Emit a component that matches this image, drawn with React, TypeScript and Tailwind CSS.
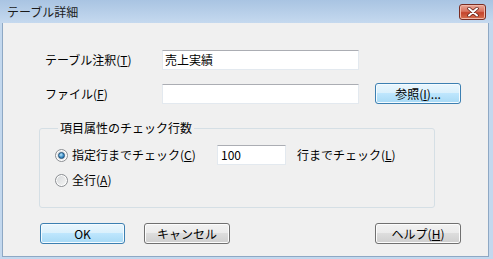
import React from "react";

function Mn({ c }: { c: string }) {
  return (
    <>
      (<span className="underline underline-offset-[1px]">{c}</span>)
    </>
  );
}

function Radio({ checked }: { checked?: boolean }) {
  return (
    <span className="flex h-[13px] w-[13px] shrink-0 items-center justify-center rounded-full border border-[#8c8f93] bg-[linear-gradient(135deg,#d4d6d8,#f7f7f7)] shadow-[inset_0_0_0_1px_#ffffff]">
      {checked && (
        <span className="h-[7px] w-[7px] rounded-full border border-[#1f4f78] bg-[radial-gradient(circle_at_40%_35%,#bfe8fb,#3d8fc8_55%,#1b5d93)]" />
      )}
    </span>
  );
}

function Input({ value, className }: { value?: string; className: string }) {
  return (
    <div
      className={`flex items-center border border-[#e3e9ef] border-t-[#abadb3] bg-white pl-[2px] text-[12px] text-black ${className}`}
    >
      {value}
    </div>
  );
}

const grayBtn =
  "flex items-center justify-center rounded-[3px] border border-[#707070] bg-[linear-gradient(to_bottom,#f2f2f2_0%,#ebebeb_50%,#dddddd_50%,#cfcfcf_100%)] shadow-[inset_0_0_0_1px_#fcfcfc] text-[12px] text-black";
const blueBtn =
  "flex items-center justify-center rounded-[3px] border border-[#3c7fb1] bg-[linear-gradient(to_bottom,#eaf6fd_0%,#d9f0fc_50%,#bee6fd_50%,#a7d9f5_100%)] shadow-[inset_0_0_0_1px_#f4fbff] text-[12px] text-black";

export default function App() {
  return (
    <div className="flex h-[259px] w-[493px] flex-col bg-[#c3d8ee] font-['Noto_Sans_CJK_JP','Liberation_Sans',sans-serif] text-[12px] leading-[16px] text-black">
      {/* title bar */}
      <div className="flex h-[23px] items-center justify-between bg-[linear-gradient(to_bottom,#a9c4e2,#c5d9ef)] pl-[7px] pr-[7px]">
        <span className="text-[12px] text-[#1b1b1b]">テーブル詳細</span>
        <div className="flex h-[16px] w-[27px] items-center justify-center rounded-[3px] border border-[#7a2d22] bg-[linear-gradient(to_bottom,#e9a898_0%,#d9735e_45%,#c4432b_55%,#d6704f_100%)] shadow-[inset_0_0_0_1px_#f0b7a8]">
          <svg width="12" height="10" viewBox="0 0 12 10">
            <path d="M2 1.5 L10 8.5 M10 1.5 L2 8.5" stroke="#5a1d14" strokeWidth="3.4" strokeLinecap="round" />
            <path d="M2 1.5 L10 8.5 M10 1.5 L2 8.5" stroke="#ffffff" strokeWidth="2" strokeLinecap="round" />
          </svg>
        </div>
      </div>

      {/* frame + client */}
      <div className="flex flex-1 flex-col pb-[2px] pl-[2px] pr-[4px]">
        <div className="flex flex-1 flex-col border border-t-0 border-[#8ea8c4] bg-[#f0f0f0] pl-[36px]">
          <div className="mt-[27px] flex h-[20px] items-center">
            <span className="w-[123px] pl-[6px]">
              テーブル注釈<Mn c="T" />
            </span>
            <Input value="売上実績" className="h-[20px] w-[197px]" />
          </div>

          <div className="mt-[13px] flex h-[21px] items-center">
            <span className="w-[123px] pl-[6px]">
              ファイル<Mn c="F" />
            </span>
            <Input className="h-[20px] w-[197px]" />
            <div className={`${blueBtn} ml-[16px] h-[21px] w-[86px]`}>
              参照<Mn c="I" />...
            </div>
          </div>

          <fieldset className="mt-[16px] w-[396px] rounded-[3px] border border-[#d5dfe5] pb-[17px] pl-[15px]">
            <legend className="ml-[3px] px-[2px]">項目属性のチェック行数</legend>
            <div className="mt-[9px] flex h-[20px] items-center">
              <div className="flex w-[162px] items-center gap-[4px]">
                <Radio checked />
                <span>
                  指定行までチェック<Mn c="C" />
                </span>
              </div>
              <Input value="100" className="h-[20px] w-[69px] pl-[3px]" />
              <span className="ml-[11px]">
                行までチェック<Mn c="L" />
              </span>
            </div>
            <div className="mt-[5px] flex h-[20px] items-center gap-[4px]">
              <Radio />
              <span>
                全行<Mn c="A" />
              </span>
            </div>
          </fieldset>

          <div className="mt-[15px] flex items-center pr-[27px]">
            <div className={`${blueBtn} ml-[1px] h-[21px] w-[85px] border-[#3c7fb1] shadow-[inset_0_0_0_1px_#61c6f0,inset_0_0_0_2px_#e9f7fe]`}>
              OK
            </div>
            <div className={`${grayBtn} ml-[19px] h-[21px] w-[86px]`}>キャンセル</div>
            <div className={`${grayBtn} ml-auto h-[21px] w-[86px]`}>
              ヘルプ<Mn c="H" />
            </div>
          </div>
        </div>
      </div>
    </div>
  );
}
